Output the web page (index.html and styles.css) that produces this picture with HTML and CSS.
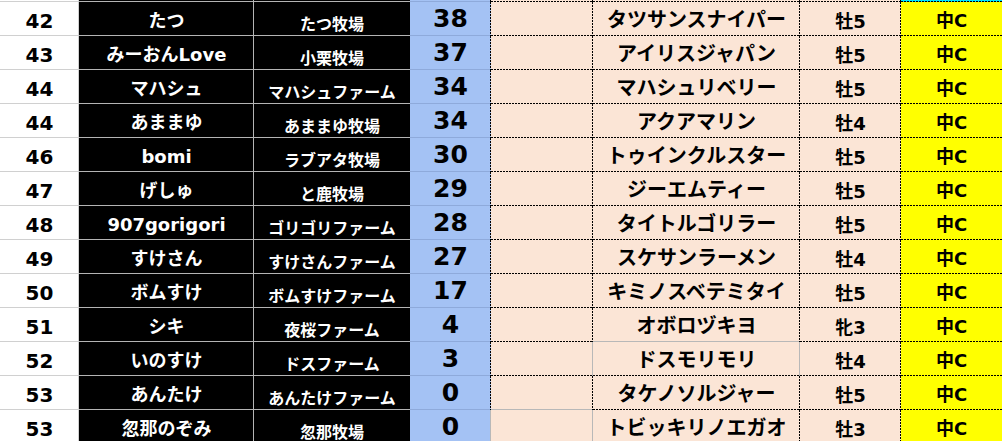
FILE: index.html
```html
<!DOCTYPE html>
<html lang="ja">
<head>
<meta charset="utf-8">
<title>ランキング</title>
<link rel="stylesheet" href="styles.css">
</head>
<body>
<div class="sheet">
  <div class="c rank top"></div><div class="c name top"></div><div class="c farm top"></div><div class="c pts top"></div><div class="c empty top"></div><div class="c horse top"></div><div class="c sex top"></div><div class="c grade top sel"></div>

  <div class="c rank">42</div><div class="c name">たつ</div><div class="c farm">たつ牧場</div><div class="c pts">38</div><div class="c empty"></div><div class="c horse">タツサンスナイパー</div><div class="c sex">牡5</div><div class="c grade">中C</div>
  <div class="c rank">43</div><div class="c name">みーおんLove</div><div class="c farm">小栗牧場</div><div class="c pts">37</div><div class="c empty"></div><div class="c horse">アイリスジャパン</div><div class="c sex">牡5</div><div class="c grade">中C</div>
  <div class="c rank">44</div><div class="c name">マハシュ</div><div class="c farm">マハシュファーム</div><div class="c pts">34</div><div class="c empty"></div><div class="c horse">マハシュリベリー</div><div class="c sex">牡5</div><div class="c grade">中C</div>
  <div class="c rank">44</div><div class="c name">あままゆ</div><div class="c farm">あままゆ牧場</div><div class="c pts">34</div><div class="c empty"></div><div class="c horse">アクアマリン</div><div class="c sex">牡4</div><div class="c grade">中C</div>
  <div class="c rank">46</div><div class="c name">bomi</div><div class="c farm">ラブアタ牧場</div><div class="c pts">30</div><div class="c empty"></div><div class="c horse">トゥインクルスター</div><div class="c sex">牡5</div><div class="c grade">中C</div>
  <div class="c rank">47</div><div class="c name">げしゅ</div><div class="c farm">と鹿牧場</div><div class="c pts">29</div><div class="c empty"></div><div class="c horse">ジーエムティー</div><div class="c sex">牡5</div><div class="c grade">中C</div>
  <div class="c rank">48</div><div class="c name">907gorigori</div><div class="c farm">ゴリゴリファーム</div><div class="c pts">28</div><div class="c empty"></div><div class="c horse">タイトルゴリラー</div><div class="c sex">牡5</div><div class="c grade">中C</div>
  <div class="c rank">49</div><div class="c name">すけさん</div><div class="c farm">すけさんファーム</div><div class="c pts">27</div><div class="c empty"></div><div class="c horse">スケサンラーメン</div><div class="c sex">牡4</div><div class="c grade">中C</div>
  <div class="c rank">50</div><div class="c name">ボムすけ</div><div class="c farm">ボムすけファーム</div><div class="c pts">17</div><div class="c empty"></div><div class="c horse">キミノスベテミタイ</div><div class="c sex">牡5</div><div class="c grade">中C</div>
  <div class="c rank">51</div><div class="c name">シキ</div><div class="c farm">夜桜ファーム</div><div class="c pts">4</div><div class="c empty"></div><div class="c horse grid-b">オボロヅキヨ</div><div class="c sex">牝3</div><div class="c grade">中C</div>
  <div class="c rank">52</div><div class="c name">いのすけ</div><div class="c farm">ドスファーム</div><div class="c pts">3</div><div class="c empty grid-r"></div><div class="c horse grid-r">ドスモリモリ</div><div class="c sex">牡4</div><div class="c grade">中C</div>
  <div class="c rank">53</div><div class="c name">あんたけ</div><div class="c farm">あんたけファーム</div><div class="c pts">0</div><div class="c empty grid-b"></div><div class="c horse">タケノソルジャー</div><div class="c sex">牡5</div><div class="c grade">中C</div>
  <div class="c rank">53</div><div class="c name">忽那のぞみ</div><div class="c farm">忽那牧場</div><div class="c pts grid-r">0</div><div class="c empty grid-r grid-b"></div><div class="c horse">トビッキリノエガオ</div><div class="c sex">牡3</div><div class="c grade">中C</div>
</div>
</body>
</html>
```

FILE: styles.css
```css
html, body {
  margin: 0;
  padding: 0;
  background: #ffffff;
  overflow: hidden;
}

.sheet {
  --dotH: repeating-linear-gradient(to right, #000 0 2px, transparent 2px 3px);
  --dotV: repeating-linear-gradient(to bottom, #000 0 2px, transparent 2px 3px);
  --none: linear-gradient(transparent, transparent);
  display: grid;
  grid-template-columns: 79px 175px 156px 81px 102px 207px 101px 101px;
  grid-auto-rows: 34px;
  grid-template-rows: 2px;
  width: 1002px;
  font-family: "DejaVu Sans", "Noto Sans CJK JP", sans-serif;
  font-weight: bold;
}

.c {
  --bg: #fbe5d6;
  --lr: var(--dotV);
  --lb: var(--dotH);
  box-sizing: border-box;
  overflow: hidden;
  white-space: nowrap;
  text-align: center;
  color: #000;
  background:
    var(--lr) right top / 1px 100% no-repeat,
    var(--lb) left bottom / 100% 1px no-repeat,
    var(--bg);
}

.rank {
  --bg: #ffffff;
  --lr: linear-gradient(#d0d0d0, #d0d0d0);
  --lb: linear-gradient(#d0d0d0, #d0d0d0);
  font-size: 20px;
  line-height: 39px;
}

.name {
  --bg: #000;
  --lr: linear-gradient(#b4b4b4, #b4b4b4);
  --lb: linear-gradient(#b4b4b4, #b4b4b4);
  color: #fff;
  font-size: 18px;
  line-height: 38px;
}

.farm {
  --bg: #000;
  --lr: var(--none);
  --lb: linear-gradient(#b4b4b4, #b4b4b4);
  color: #fff;
  font-size: 16px;
  line-height: 45px;
}

.pts {
  --bg: #a4c2f4;
  --lb: linear-gradient(#8eaadb, #8eaadb);
  font-size: 25px;
  line-height: 33px;
}

.horse {
  font-size: 20px;
  line-height: 36px;
}

.sex {
  font-size: 18px;
  line-height: 40px;
}

.grade {
  --bg: #ffff00;
  --lr: var(--none);
  font-size: 18px;
  line-height: 38px;
}

.top.sel {
  --bg: #00e5ff;
}

.grid-b {
  --lb: linear-gradient(#b8b8b8, #b8b8b8);
}

.grid-r {
  --lr: linear-gradient(#b8b8b8, #b8b8b8);
}
```
